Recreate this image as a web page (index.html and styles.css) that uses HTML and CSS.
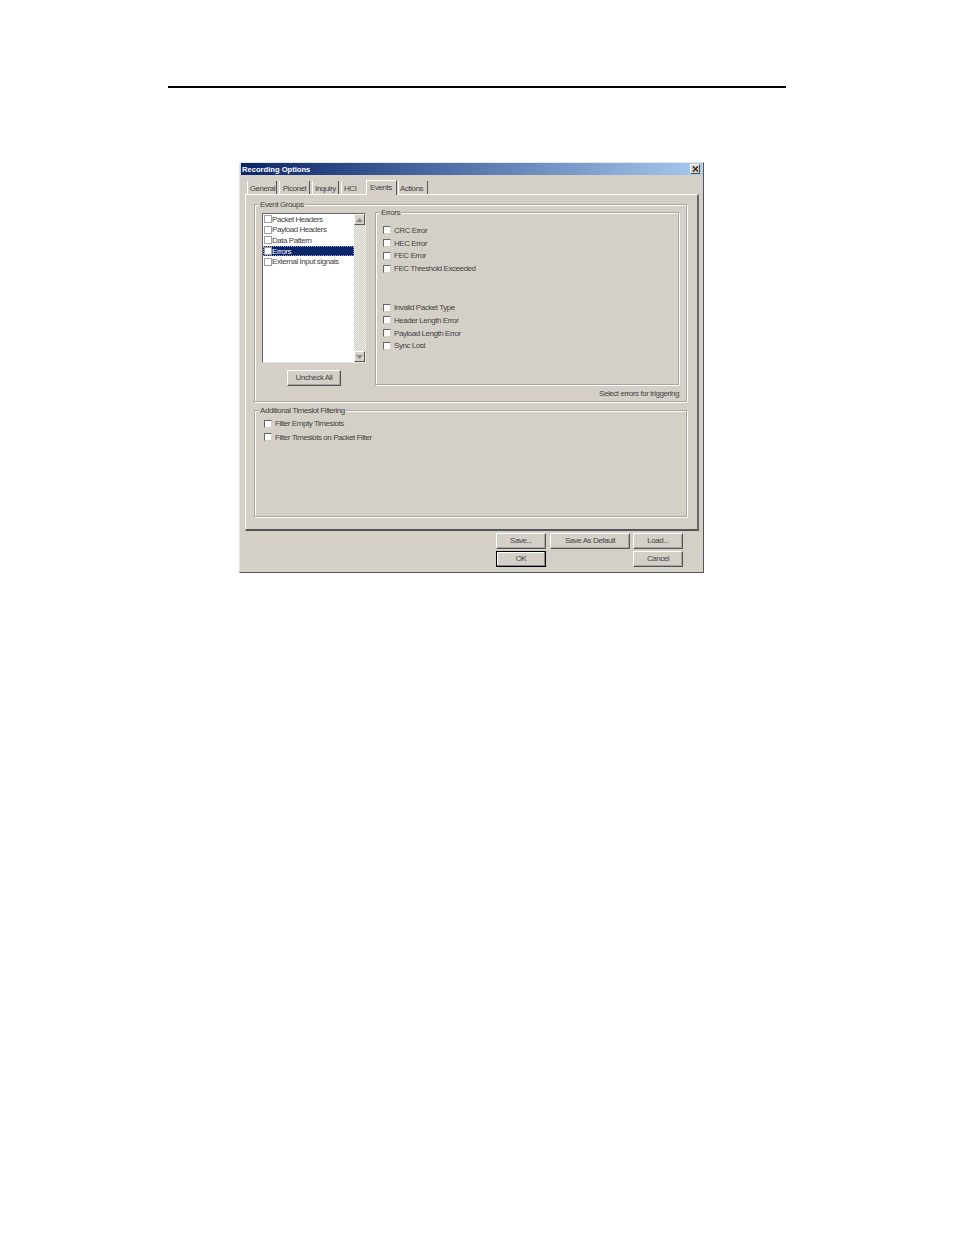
FILE: index.html
```html
<!DOCTYPE html>
<html lang="en">
<head>
    <meta charset="UTF-8">
    <title>Recording Options</title>
    <link rel="stylesheet" href="styles.css">
</head>
<body>
    <div class="rule"></div>

    <div class="window">
        <div class="titlebar">
            <span class="title">Recording Options</span>
            <span class="close">
                <svg width="7" height="6" viewBox="0 0 7 6"><path d="M1 0.5 L6 5.5 M6 0.5 L1 5.5" stroke="#222" stroke-width="1.2" fill="none"/></svg>
            </span>
        </div>

        <div class="tabs">
            <span class="tab tab-general">General</span>
            <span class="tab tab-piconet">Piconet</span>
            <span class="tab tab-inquiry">Inquiry</span>
            <span class="tab tab-hci">HCI</span>
            <span class="tab tab-events active">Events</span>
            <span class="tab tab-actions">Actions</span>
        </div>

        <div class="panel">
            <div class="group group-events">
                <span class="legend">Event Groups</span>
                <div class="group-left">
                    <div class="listbox">
                        <ul class="list">
                            <li><i class="box"></i>Packet Headers</li>
                            <li><i class="box"></i>Payload Headers</li>
                            <li><i class="box"></i>Data Pattern</li>
                            <li class="selected"><i class="box"></i>Errors</li>
                            <li><i class="box"></i>External Input signals</li>
                        </ul>
                        <div class="scrollbar">
                            <span class="arrow"><svg width="7" height="4" viewBox="0 0 7 4"><path d="M3.5 0 L7 4 H0 Z" fill="#8a8a86"/></svg></span>
                            <span class="arrow"><svg width="7" height="4" viewBox="0 0 7 4"><path d="M0 0 H7 L3.5 4 Z" fill="#8a8a86"/></svg></span>
                        </div>
                    </div>
                    <button class="btn btn-uncheck">Uncheck All</button>
                </div>
                <div class="group-right">
                    <div class="group group-errors">
                        <span class="legend">Errors</span>
                        <div class="checks">
                            <label class="check"><i class="box"></i>CRC Error</label>
                            <label class="check"><i class="box"></i>HEC Error</label>
                            <label class="check"><i class="box"></i>FEC Error</label>
                            <label class="check"><i class="box"></i>FEC Threshold Exceeded</label>
                        </div>
                        <div class="checks checks-second">
                            <label class="check"><i class="box"></i>Invalid Packet Type</label>
                            <label class="check"><i class="box"></i>Header Length Error</label>
                            <label class="check"><i class="box"></i>Payload Length Error</label>
                            <label class="check"><i class="box"></i>Sync Lost</label>
                        </div>
                    </div>
                    <div class="hint">Select errors for triggering</div>
                </div>
            </div>

            <div class="group group-timeslot">
                <span class="legend">Additional Timeslot Filtering</span>
                <label class="check"><i class="box"></i>Filter Empty Timeslots</label>
                <label class="check"><i class="box"></i>Filter Timeslots on Packet Filter</label>
            </div>
        </div>

        <div class="actions">
            <button class="btn btn-save">Save...</button>
            <button class="btn btn-default-save">Save As Default</button>
            <button class="btn btn-load">Load...</button>
            <button class="btn btn-save btn-ok">OK</button>
            <button class="btn btn-load">Cancel</button>
        </div>
    </div>
</body>
</html>
```

FILE: styles.css
```css
body {
    margin: 0;
    background-color: #ffffff;
    font-family: 'Liberation Sans', Arial, sans-serif;
    font-size: 8px;
    letter-spacing: -0.45px;
    color: #444444;
}
.rule {
    width: 618px;
    height: 2px;
    margin: 86px 0 0 168px;
    background-color: #000000;
}
.window {
    box-sizing: border-box;
    width: 465px;
    height: 411px;
    margin: 74px 0 0 239px;
    padding: 0 1px 1px 1px;
    background-color: #d4d0c8;
    border: 1px solid #e8e6e0;
    border-right-color: #555555;
    border-bottom-color: #555555;
}
.titlebar {
    display: flex;
    align-items: center;
    justify-content: space-between;
    height: 12px;
    padding: 0 2px 0 1px;
    background: linear-gradient(to right, #0a246a, #a6caf0);
}
.title {
    color: #ffffff;
    font-weight: bold;
    font-size: 7.6px;
    letter-spacing: 0;
}
.close {
    display: flex;
    align-items: center;
    justify-content: center;
    box-sizing: border-box;
    width: 10px;
    height: 10px;
    background-color: #d4d0c8;
    border: 1px solid #ffffff;
    border-right-color: #555555;
    border-bottom-color: #555555;
}
.tabs {
    display: flex;
    align-items: flex-end;
    height: 19px;
    padding-left: 6px;
}
.tab {
    box-sizing: border-box;
    height: 13px;
    padding-top: 3px;
    text-align: center;
    white-space: nowrap;
    border-left: 1px solid #ffffff;
    border-right: 1px solid #555555;
    margin-right: 2px;
}
.tab-general { width: 30px; padding-left: 1px; }
.tab-piconet { width: 31px; }
.tab-inquiry { width: 27px; }
.tab-hci { width: 24px; padding-left: 2px; text-align: left; border-right: 0; margin-right: 1px; }
.tab-events { width: 31px; }
.tab-actions { width: 30px; padding-left: 1px; text-align: left; margin: 0 0 0 1px; }
.tab.active {
    height: 15px;
    padding-top: 2px;
    padding-right: 1px;
    border-top: 1px solid #ffffff;
    margin-right: 0;
    margin-bottom: -1px;
    background-color: #d4d0c8;
    position: relative;
}
.panel {
    box-sizing: border-box;
    width: 454px;
    height: 337px;
    margin-left: 4px;
    padding: 9px 10px 0 8px;
    border: 1px solid #ffffff;
    border-right: 2px solid #666666;
    border-bottom: 2px solid #555555;
}
.group {
    position: relative;
    box-sizing: border-box;
    border: 1px solid #a8a6a0;
    box-shadow: inset 1px 1px 0 #ffffff, 1px 1px 0 #ffffff;
}
.legend {
    position: absolute;
    top: -6px;
    left: 4px;
    padding: 0 1px;
    white-space: nowrap;
    background-color: #d4d0c8;
    line-height: 11px;
}
.group-events {
    display: flex;
    height: 198px;
    padding: 8px 7px 0 7px;
    margin-bottom: 8px;
}
.group-left {
    display: flex;
    flex-direction: column;
    width: 104px;
    margin-right: 9px;
}
.listbox {
    display: flex;
    width: 104px;
    height: 150px;
    box-sizing: border-box;
    background-color: #ffffff;
    border: 1px solid #666666;
    border-right-color: #e8e6e0;
    border-bottom-color: #e8e6e0;
}
.list {
    flex: 1;
    margin: 0;
    padding: 0;
    list-style: none;
}
.list li {
    display: flex;
    align-items: center;
    height: 10.6px;
    padding-left: 1px;
    white-space: nowrap;
}
.list li .box {
    border-color: #a0a0a0;
}
.list li.selected {
    background-color: #0a246a;
    color: #ffffff;
    outline: 1px dotted #9aa4c0;
    outline-offset: -1px;
}
.box {
    flex: none;
    box-sizing: border-box;
    display: inline-block;
    width: 8px;
    height: 8px;
    background-color: #ffffff;
    border: 1px solid #666666;
    border-right-color: #d4d0c8;
    border-bottom-color: #d4d0c8;
}
.scrollbar {
    display: flex;
    flex-direction: column;
    justify-content: space-between;
    width: 11px;
    background-color: #eceae5;
    background-image: conic-gradient(#d4d0c8 25%, transparent 0 50%, #d4d0c8 0 75%, transparent 0);
    background-size: 2px 2px;
}
.arrow {
    display: flex;
    align-items: center;
    justify-content: center;
    box-sizing: border-box;
    height: 11px;
    background-color: #d4d0c8;
    border: 1px solid #ffffff;
    border-right-color: #555555;
    border-bottom-color: #555555;
}
.btn {
    box-sizing: border-box;
    height: 16px;
    padding: 0 0 2px;
    font: inherit;
    letter-spacing: inherit;
    color: inherit;
    background-color: #d4d0c8;
    border: 1px solid #ffffff;
    border-right-color: #555555;
    border-bottom-color: #555555;
    box-shadow: inset -1px -1px 0 #a8a6a0;
}
.btn-uncheck {
    align-self: flex-start;
    width: 54px;
    margin: 7px 0 0 25px;
}
.group-right {
    display: flex;
    flex-direction: column;
    width: 305px;
}
.group-errors {
    height: 173px;
    margin-top: -1px;
    padding: 11px 0 0 7px;
}
.check {
    display: flex;
    align-items: center;
    height: 12.8px;
    white-space: nowrap;
}
.check .box {
    margin-right: 3px;
}
.checks-second {
    margin-top: 26px;
}
.hint {
    margin-top: 3px;
    line-height: 11px;
    text-align: right;
}
.group-timeslot {
    height: 107px;
    padding: 6px 0 0 9px;
}
.group-timeslot .check {
    height: 13.5px;
}
.actions {
    display: grid;
    grid-template-columns: 50px 4px 80px 3px 50px;
    grid-template-rows: 16px 16px;
    row-gap: 2px;
    justify-content: end;
    padding: 2px 19px 0 0;
}
.btn-save { grid-column: 1; }
.btn-default-save { grid-column: 3; }
.btn-load { grid-column: 5; }
.btn-ok {
    border: 1px solid #000000;
    box-shadow: inset -1px -1px 0 #888888, inset 1px 1px 0 #ffffff;
}
```
